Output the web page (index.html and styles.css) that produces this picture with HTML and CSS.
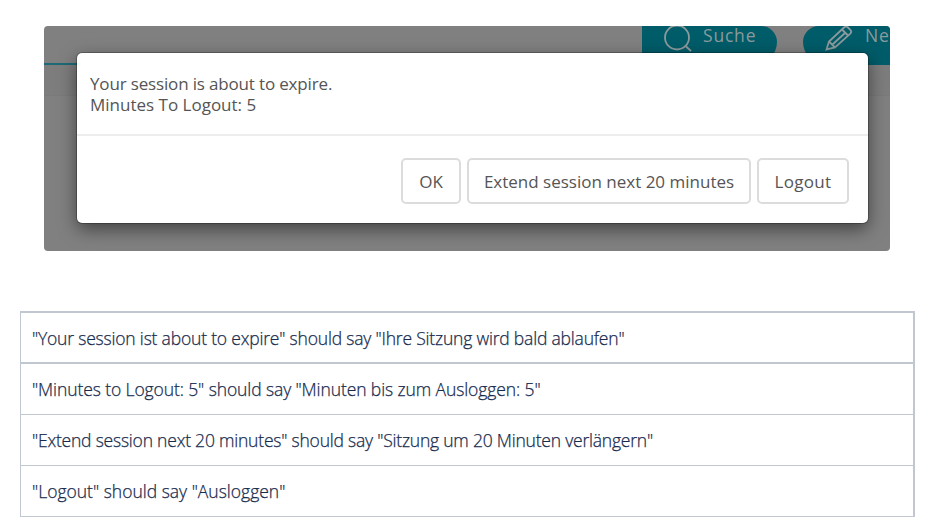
FILE: index.html
```html
<!DOCTYPE html>
<html lang="en">
<head>
  <meta charset="UTF-8">
  <meta name="viewport" content="width=device-width, initial-scale=1.0">
  <title>Session timeout texts</title>
  <link rel="stylesheet" href="styles.css">
</head>
<body>
  <div class="preview">
    <div class="toolbar">
      <div class="tool tool-search">
        <svg width="30" height="30" viewBox="0 0 30 30">
          <circle cx="14" cy="11.5" r="12"/>
          <path d="M22.500 20l5.500 5"/>
        </svg>
        <span>Suche</span>
      </div>
      <div class="tool tool-new">
        <svg width="28" height="26" viewBox="0 0 28 26">
          <path d="M1.500 23.500l2.500-8L19 1.500q2-1.800 4 0l2.500 2.500q1.600 1.800-.2 3.600L10 21.500z"/>
          <path d="M4 15.500l6 6M17 3.500l6 6M20.500 6.500l-13 12"/>
        </svg>
        <span>Ne</span>
      </div>
    </div>
    <div class="subbar"></div>

    <div class="modal">
      <div class="modal-body">
        <div class="line-expire">Your session is about to expire.</div>
        <div class="line-minutes">Minutes To Logout: 5</div>
      </div>
      <div class="modal-footer">
        <button class="btn btn-ok">OK</button>
        <button class="btn btn-extend">Extend session next 20 minutes</button>
        <button class="btn btn-logout">Logout</button>
      </div>
    </div>
  </div>

  <div class="texts">
    <div class="row row-expire">"Your session ist about to expire" should say "Ihre Sitzung wird bald ablaufen"</div>
    <div class="row row-minutes">"Minutes to Logout: 5" should say "Minuten bis zum Ausloggen: 5"</div>
    <div class="row row-extend">"Extend session next 20 minutes" should say "Sitzung um 20 Minuten verlängern"</div>
    <div class="row row-logout">"Logout" should say "Ausloggen"</div>
  </div>
</body>
</html>
```

FILE: styles.css
```css
body {
  margin: 0;
  padding: 26px 20px 0;
  background-color: #fff;
  font-family: "Open Sans", "Noto Sans", sans-serif;
}

.preview {
  position: relative;
  width: 846px;
  height: 225px;
  margin-left: 24px;
  border-radius: 4px;
  background-color: #808080;
  overflow: hidden;
}

/* toolbar behind the dialog */
.toolbar {
  display: flex;
  justify-content: flex-end;
  gap: 26px;
  height: 37px;
  border-bottom: 2px solid #1c6a75;
}

.tool {
  display: flex;
  box-sizing: border-box;
  height: 39px;
  background-color: #005c69;
  color: #8b9a9c;
  font-size: 17.5px;
  line-height: 19px;
  letter-spacing: 0.8px;
}

.tool svg {
  flex: none;
  fill: none;
  stroke: #8b9a9c;
  stroke-width: 1.8;
}

.tool-search {
  width: 135px;
  padding-left: 21px;
  gap: 10px;
  border-radius: 0 18px 26px 0;
}

.tool-new {
  width: 87px;
  padding-left: 22px;
  gap: 12px;
  border-radius: 18px 0 0 26px;
}

.subbar {
  height: 30px;
  background-color: #7d7d7d;
  border-bottom: 1px solid #7a7a7a;
}

.modal {
  position: absolute;
  left: 33px;
  top: 27px;
  width: 791px;
  height: 170px;
  border-radius: 5px;
  background-color: #fff;
  box-shadow: 0 0 0 1px rgba(0, 0, 0, 0.25), 0 6px 18px rgba(0, 0, 0, 0.5);
  color: #555;
  font-size: 17px;
}

.modal-body {
  box-sizing: border-box;
  height: 83px;
  padding: 20px 13px 0;
  border-bottom: 2px solid #ededed;
  line-height: 21px;
}

.line-expire {
  letter-spacing: -0.16px;
}

.modal-footer {
  display: flex;
  justify-content: flex-end;
  gap: 6px;
  padding: 22px 19px 0 0;
}

.btn {
  box-sizing: border-box;
  height: 46px;
  padding: 0;
  border: 2px solid #dcdcdc;
  border-radius: 5px;
  background-color: #fff;
  color: #555;
  font-family: inherit;
  font-size: 17px;
  white-space: nowrap;
}

.btn-ok {
  width: 60px;
}

.btn-extend {
  width: 284px;
}

.btn-logout {
  width: 92px;
  letter-spacing: 0.3px;
}

/* list of wordings */
.texts {
  box-sizing: border-box;
  width: 895px;
  margin-top: 60px;
  border: 1px solid #c1c7d0;
  border-width: 2px 2px 0 1px;
}

.row {
  box-sizing: border-box;
  height: 51px;
  padding-left: 11px;
  border-bottom: 1px solid #c1c7d0;
  color: #172b4d;
  font-size: 17.5px;
  font-weight: 300;
  line-height: 51px;
  white-space: nowrap;
  -webkit-text-stroke: 0.25px #172b4d;
}

.row:first-child {
  border-bottom-width: 2px;
}

.row-expire {
  letter-spacing: -0.19px;
}

.row-minutes {
  letter-spacing: -0.1px;
}

.row-extend {
  letter-spacing: -0.21px;
}
```
